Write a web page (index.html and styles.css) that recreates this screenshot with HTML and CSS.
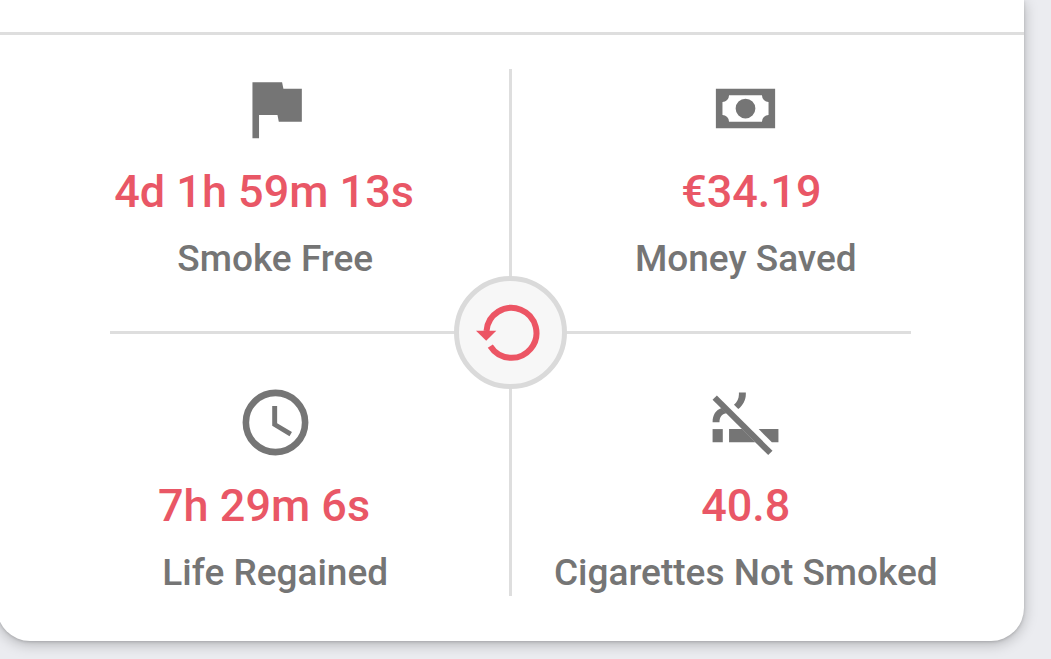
FILE: index.html
```html
<!DOCTYPE html>
<html lang="en">
<head>
  <meta charset="UTF-8">
  <meta name="viewport" content="width=device-width, initial-scale=1">
  <title>Smoke Free</title>
  <link rel="stylesheet" href="styles.css">
</head>
<body>

  <main class="card">
    <div class="card-top"></div>

    <section class="stats">
      <div class="stat time">
        <svg class="icon" viewBox="0 0 24 24" aria-hidden="true">
          <path d="M14.4 6L14 4H5v17h2v-7h5.6l.4 2h7V6z"/>
        </svg>
        <div class="value">4d 1h 59m 13s&nbsp;&nbsp;</div>
        <div class="label">Smoke Free</div>
      </div>

      <div class="stat money">
        <svg class="icon" viewBox="0 0 24 24" aria-hidden="true">
          <path d="M3,6H21V18H3V6M12,9A3,3 0 0,1 15,12A3,3 0 0,1 12,15A3,3 0 0,1 9,12A3,3 0 0,1 12,9M7,8A2,2 0 0,1 5,10V14A2,2 0 0,1 7,16H17A2,2 0 0,1 19,14V10A2,2 0 0,1 17,8H7Z"/>
        </svg>
        <div class="value">&nbsp;€34.19</div>
        <div class="label">Money Saved</div>
      </div>

      <div class="stat life">
        <svg class="icon" viewBox="0 0 24 24" aria-hidden="true">
          <circle class="ring" cx="12" cy="12" r="9"/>
          <path d="M12.5 7H11v6l5.25 3.15.75-1.23-4.5-2.67z"/>
        </svg>
        <div class="value">7h 29m 6s&nbsp;&nbsp;</div>
        <div class="label">Life Regained</div>
      </div>

      <div class="stat cigarettes">
        <svg class="icon" viewBox="0 0 24 24" aria-hidden="true">
          <path d="M2 14H5.1V18H2z"/>
          <path d="M7 14H11L15 18H7z"/>
          <path d="M16 14H22V18H20z"/>
          <path d="M2 5.1L3.3 3.8L20.2 20.6L18.9 21.9z"/>
          <path d="M2 11.9C2 9.7 3 8.2 4.7 7.6L6.3 9.2C5 9.3 4.1 10.2 4.1 11.9z"/>
          <path d="M10 2.9H12.1V3.4C12.1 5.2 11.2 6.8 9.8 7.9L8.5 6.6C9.4 5.9 10 4.8 10 3.5z"/>
        </svg>
        <div class="value">40.8</div>
        <div class="label">Cigarettes Not Smoked</div>
      </div>

      <div class="line-v"></div>
      <div class="line-h"></div>

      <button class="reset" type="button" aria-label="Reset">
        <svg class="reset-icon" viewBox="-35 -35 70 70" aria-hidden="true">
          <path class="arc" d="M-20.7 13.2A25 25 0 1 0 -24.5 -2"/>
          <path class="head" d="M-35 -2.3H-14.7L-24.8 7.8z"/>
        </svg>
      </button>
    </section>
  </main>

</body>
</html>
```
FILE: styles.css
```css
body {
  margin: 0;
  min-height: 100vh;
  background-color: #ebecf0;
  font-family: Roboto, sans-serif;
  font-weight: 500;
  overflow: hidden;
}

/* the card runs a little past the left side of the screen */
.card {
  margin: 0 27px 0 -3px;
  padding-bottom: 45px;
  background-color: #fff;
  border-radius: 0 0 33px 33px;
  box-shadow: 0 3px 14px rgba(0, 0, 0, 0.25), 0 1px 3px rgba(0, 0, 0, 0.15);
}

.card-top {
  height: 32px;
  border-bottom: 3px solid #dedede;
}

.stats {
  display: grid;
  grid-template-columns: 1fr 1fr;
  grid-template-rows: 264px 263px;
  margin: 34px 43px 0;
}

.stat {
  display: flex;
  flex-direction: column;
  align-items: center;
  text-align: center;
}

.time {
  grid-area: 1 / 1;
}

.money {
  grid-area: 1 / 2;
}

.life {
  grid-area: 2 / 1;
  padding-top: 50px;
}

.cigarettes {
  grid-area: 2 / 2;
  padding-top: 50px;
}

.icon {
  width: 79px;
  height: 79px;
  fill: #757575;
}

.ring {
  fill: none;
  stroke: #757575;
  stroke-width: 2;
}

.value {
  margin-top: 18px;
  font-size: 45px;
  line-height: 52px;
  color: #e95766;
}

.label {
  margin-top: 19px;
  font-size: 37px;
  line-height: 44px;
  color: #757575;
  white-space: nowrap;
}

.line-v,
.line-h {
  grid-area: 1 / 1 / 3 / 3;
  background-color: #dedede;
}

.line-v {
  justify-self: center;
  width: 3px;
}

.line-h {
  align-self: center;
  height: 3px;
  margin: 0 70px;
}

.reset {
  grid-area: 1 / 1 / 3 / 3;
  place-self: center;
  display: flex;
  align-items: center;
  justify-content: center;
  width: 113px;
  height: 113px;
  padding: 0;
  background-color: #f7f7f7;
  border: 5px solid #dadada;
  border-radius: 50%;
  cursor: pointer;
}

.reset-icon {
  width: 70px;
  height: 70px;
}

.arc {
  fill: none;
  stroke: #ec5564;
  stroke-width: 6;
}

.head {
  fill: #ec5564;
}
```
